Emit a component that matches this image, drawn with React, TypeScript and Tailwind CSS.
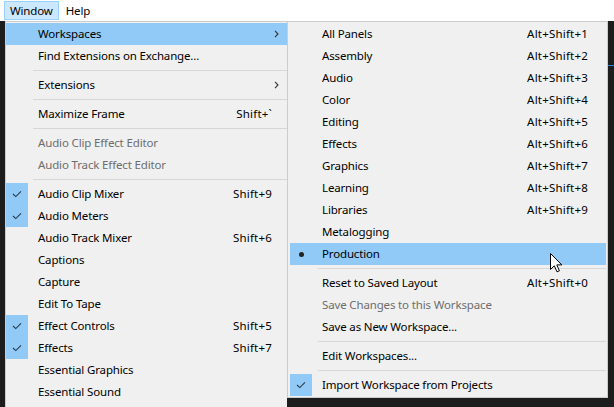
import React from 'react';

type Item =
  | { sep: true }
  | {
      sep?: false;
      label: string;
      shortcut?: string;
      submenu?: boolean;
      disabled?: boolean;
      checked?: boolean;
      bullet?: boolean;
      active?: boolean;
    };

const mainItems: Item[] = [
  { label: 'Workspaces', submenu: true, active: true },
  { label: 'Find Extensions on Exchange...' },
  { sep: true },
  { label: 'Extensions', submenu: true },
  { sep: true },
  { label: 'Maximize Frame', shortcut: 'Shift+`' },
  { sep: true },
  { label: 'Audio Clip Effect Editor', disabled: true },
  { label: 'Audio Track Effect Editor', disabled: true },
  { sep: true },
  { label: 'Audio Clip Mixer', shortcut: 'Shift+9', checked: true },
  { label: 'Audio Meters', checked: true },
  { label: 'Audio Track Mixer', shortcut: 'Shift+6' },
  { label: 'Captions' },
  { label: 'Capture' },
  { label: 'Edit To Tape' },
  { label: 'Effect Controls', shortcut: 'Shift+5', checked: true },
  { label: 'Effects', shortcut: 'Shift+7', checked: true },
  { label: 'Essential Graphics' },
  { label: 'Essential Sound' },
];

const workspaceItems: Item[] = [
  { label: 'All Panels', shortcut: 'Alt+Shift+1' },
  { label: 'Assembly', shortcut: 'Alt+Shift+2' },
  { label: 'Audio', shortcut: 'Alt+Shift+3' },
  { label: 'Color', shortcut: 'Alt+Shift+4' },
  { label: 'Editing', shortcut: 'Alt+Shift+5' },
  { label: 'Effects', shortcut: 'Alt+Shift+6' },
  { label: 'Graphics', shortcut: 'Alt+Shift+7' },
  { label: 'Learning', shortcut: 'Alt+Shift+8' },
  { label: 'Libraries', shortcut: 'Alt+Shift+9' },
  { label: 'Metalogging' },
  { label: 'Production', bullet: true, active: true },
  { sep: true },
  { label: 'Reset to Saved Layout', shortcut: 'Alt+Shift+0' },
  { label: 'Save Changes to this Workspace', disabled: true },
  { label: 'Save as New Workspace...' },
  { sep: true },
  { label: 'Edit Workspaces...' },
  { sep: true },
  { label: 'Import Workspace from Projects', checked: true },
];

const Check = () => (
  <svg width="10" height="8" viewBox="0 0 10 8" fill="none">
    <polyline points="1,4 3.8,6.6 9,1.4" stroke="#2b3a4a" strokeWidth="1.1" />
  </svg>
);

const Chevron = () => (
  <svg width="5" height="8" viewBox="0 0 5 8" fill="none">
    <polyline points="1,0.8 4,4 1,7.2" stroke="#333" strokeWidth="1.1" />
  </svg>
);

const Cursor = () => (
  <svg width="13" height="20" viewBox="0 0 13 20" className="absolute left-[260px] top-[10px]">
    <path d="M0.5 0.5 L0.5 16.5 L4.3 12.8 L7 18.8 L9.4 17.8 L6.8 11.9 L11.8 11.9 Z" fill="#fff" stroke="#000" strokeWidth="1" />
  </svg>
);

function MenuList({ items, textPl, padR, sepPl }: { items: Item[]; textPl: string; padR: string; sepPl: string }) {
  return (
    <>
      {items.map((it, i) => {
        if (it.sep) {
          return (
            <div key={i} className={`py-[3px] ${sepPl}`}>
              <div className="h-px bg-[#d7d7d7]" />
            </div>
          );
        }
        return (
          <div
            key={i}
            className={`relative flex h-[22px] items-center ${it.active ? 'bg-[#91c9f7]' : ''} ${
              it.disabled ? 'text-[#6d6d6d]' : 'text-black'
            }`}
          >
            <div
              className={`flex h-[22px] w-[22px] shrink-0 items-center justify-center ${
                it.checked || it.bullet ? 'bg-[#91c9f7]' : ''
              }`}
            >
              {it.checked && <Check />}
              {it.bullet && <div className="h-[5px] w-[5px] rounded-full bg-[#222]" />}
            </div>
            <span className={`flex-1 ${textPl}`}>{it.label}</span>
            {it.shortcut && <span className={`tracking-[0.2px] ${padR}`}>{it.shortcut}</span>}
            {it.submenu && (
              <span className="pr-[8px]">
                <Chevron />
              </span>
            )}
            {it.bullet && it.active && <Cursor />}
          </div>
        );
      })}
    </>
  );
}

export default function App() {
  return (
    <div
      className="relative h-[407px] w-[614px] overflow-hidden bg-[#1d1d1d] text-[11.5px] leading-none tracking-[-0.15px]"
      style={{ fontFamily: '"Noto Sans", "Open Sans", sans-serif' }}
    >
      <div className="flex h-[21px] items-center bg-white pl-[4px]">
        <div className="flex h-[19px] items-center border border-[#99d1ff] bg-[#cce8ff] px-[5px]">Window</div>
        <div className="px-[7px]">Help</div>
      </div>
      <div className="flex items-start pl-[5px]">
        <div className="h-[400px] w-[282px] border-t border-l border-[#cccccc] bg-[#f0f0f0] pt-px">
          <MenuList items={mainItems} textPl="pl-[10px]" padR="pr-[15px]" sepPl="pl-[27px]" />
        </div>
        <div className="flex flex-col">
          <div className="h-[377px] w-[321px] border border-[#cccccc] bg-[#f0f0f0] pt-px pr-px pl-[2px]">
            <MenuList items={workspaceItems} textPl="pl-[10px]" padR="pr-[18px]" sepPl="pl-[28px]" />
          </div>
        </div>
        <div className="flex flex-1 flex-col pt-[44px]">
          <div className="h-px bg-[#2d7fd6]" />
        </div>
      </div>
    </div>
  );
}
